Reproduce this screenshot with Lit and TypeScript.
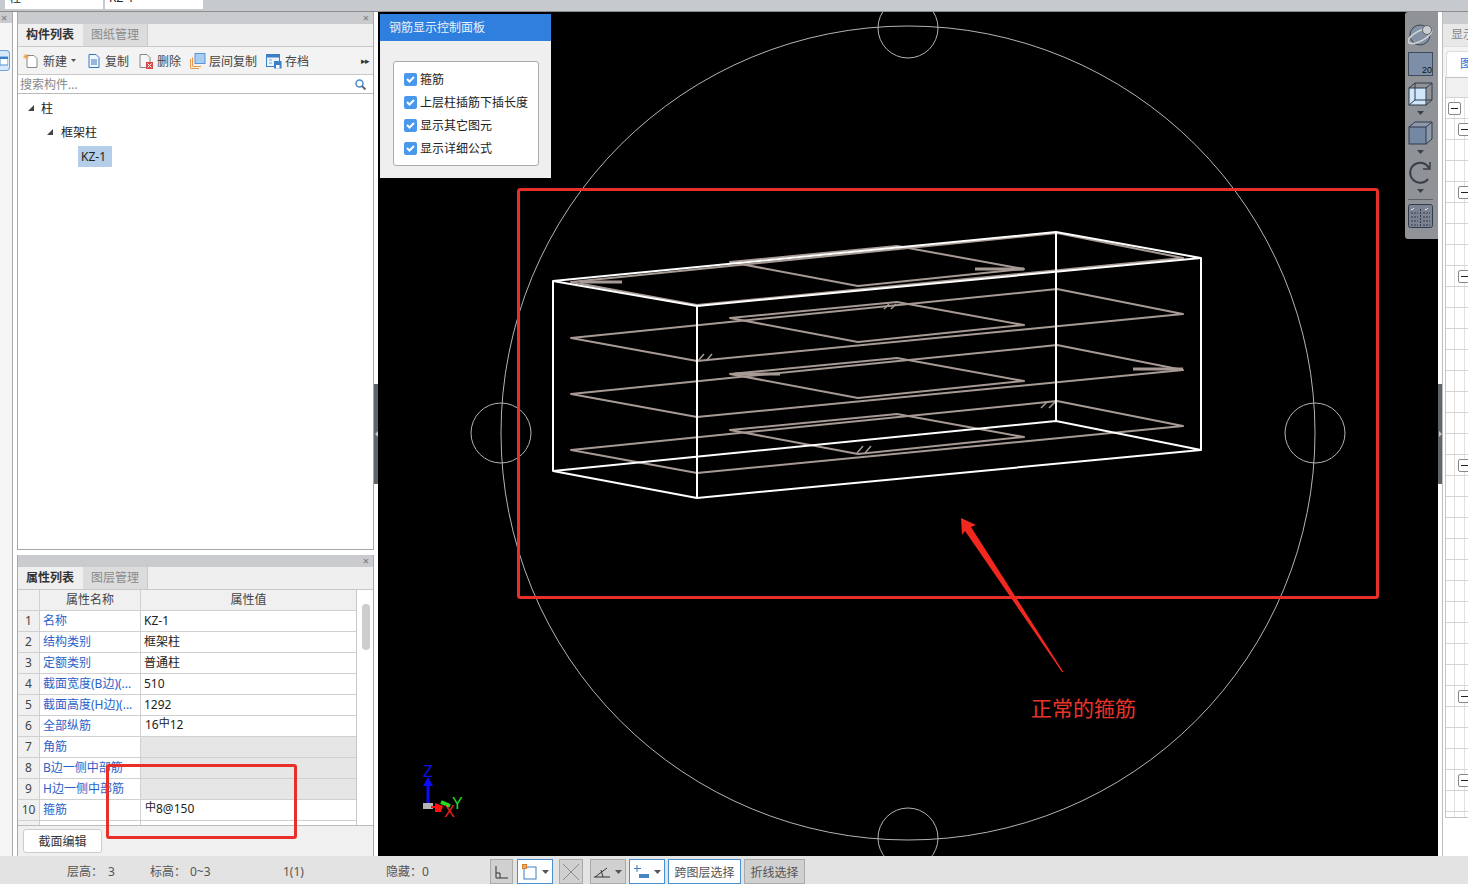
import { LitElement, html, css, svg } from 'lit';
import { customElement } from 'lit/decorators.js';

const rows = [
  { name: '名称', value: 'KZ-1' },
  { name: '结构类别', value: '框架柱' },
  { name: '定额类别', value: '普通柱' },
  { name: '截面宽度(B边)(...', value: '510' },
  { name: '截面高度(H边)(...', value: '1292' },
  { name: '全部纵筋', value: '16|12' },
  { name: '角筋', value: '', off: true },
  { name: 'B边一侧中部筋', value: '', off: true },
  { name: 'H边一侧中部筋', value: '', off: true },
  { name: '箍筋', value: '|8@150' },
  { name: '', value: '' },
];

const checks = ['箍筋', '上层柱插筋下插长度', '显示其它图元', '显示详细公式'];

// rows of the right hand table that carry a collapse box
const rightBoxes: Record<number, string> = { 0: 'l0', 1: 'l1', 4: 'l1', 8: 'l1', 17: 'l1', 28: 'l1', 32: 'l1' };

const levels = [0, 56, 112, 168];

const pts = (list: number[][], dy: number) => list.map(([x, y]) => `${x},${y + dy}`).join(' ');

const outer = [[571, 282], [697, 305], [1183, 258], [1057, 233]];
const inner = [[730, 262], [858, 286], [1024, 269], [897, 246]];

const rebar = (value: string) => {
  const parts = value.split('|');
  if (parts.length < 2) return value;
  return html`<span class="rb">${parts[0]}<span class="bar">中</span>${parts[1]}</span>`;
};

const caret = html`<svg class="caret" width="7" height="4" viewBox="0 0 7 4"><path d="M0 0h7L3.500 4z"></path></svg>`;

@customElement('app-root')
export class AppRoot extends LitElement {
  static styles = css`
    :host {
      display: block;
      position: relative;
      width: 1468px;
      height: 884px;
      overflow: hidden;
      background: #fff;
      font-family: "Noto Sans", "Noto Sans CJK SC", sans-serif;
      font-size: 12px;
      color: #222;
    }
    .top { height: 12px; background: #c6c9cd; border-bottom: 1px solid #8c8c8c; display: flex; gap: 2px; padding-left: 5px; overflow: hidden; box-sizing: border-box; }
    .top div { width: 98px; height: 9px; background: #fff; padding-left: 4px; box-sizing: border-box; overflow: hidden; }
    .top span { display: block; margin-top: -2px; line-height: 0; }
    .main { display: flex; height: 844px; }

    .strip { width: 13px; flex: none; border-right: 1px solid #aaa; box-sizing: border-box; background: #f6f6f6; }
    .strip .x { height: 11px; background: #c9cbcf; color: #777; line-height: 11px; font-size: 11px; padding-left: 1px; }
    .strip .nav { margin-top: 27px; width: 10px; height: 21px; border: 1px solid #6aa5e0; border-left: 0; border-radius: 0 4px 4px 0; background: #d6e8fa; box-sizing: border-box; display: flex; align-items: center; }

    .left { width: 361px; flex: none; padding-left: 4px; box-sizing: border-box; display: flex; flex-direction: column; gap: 5px; }
    .panel { border: 1px solid #a8a8a8; border-top: 0; display: flex; flex-direction: column; box-sizing: border-box; background: #fff; }
    .panel.one { height: 538px; }
    .panel.two { height: 301px; border-bottom: 0; }
    .bar-title { height: 12px; background: #c9cbcf; color: #777; font-size: 11px; line-height: 12px; text-align: right; padding-right: 4px; flex: none; }
    .tabs { display: flex; height: 23px; background: #efefef; border-bottom: 1px solid #c8c8c8; flex: none; box-sizing: border-box; }
    .tab { width: 64px; line-height: 22px; text-align: center; font-weight: 700; color: #333; }
    .tab.off { background: #dcdcdc; color: #8a8a8a; font-weight: 400; margin-left: 1px; border-right: 1px solid #c8c8c8; }
    .tools { display: flex; align-items: center; height: 28px; padding-left: 5px; background: #f3f3f3; border-bottom: 1px solid #c8c8c8; flex: none; box-sizing: border-box; color: #444; }
    .tool { display: flex; align-items: center; gap: 3px; margin-right: 9px; }
    .tool.first { gap: 4px; margin-right: 10px; }
    .tool svg { display: block; }
    .caret { fill: #555; margin-left: 4px; }
    .tool .caret { width: 5px; height: 3px; margin-left: 0; }
    .more { margin-left: auto; margin-right: 4px; font-size: 9px; color: #333; letter-spacing: -1px; }
    .search { display: flex; align-items: center; justify-content: space-between; height: 19px; padding: 0 7px 0 2px; border-bottom: 1px solid #bbb; color: #888; flex: none; box-sizing: border-box; }
    .tree { flex: 1; padding-top: 2px; }
    .node { display: flex; align-items: center; height: 24px; gap: 6px; }
    .node svg { fill: #444; }
    .n0 { padding-left: 10px; }
    .n1 { padding-left: 29px; }
    .leaf { margin: 2px 0 0 60px; width: 34px; height: 21px; background: #b4cde8; line-height: 21px; padding-left: 3px; box-sizing: border-box; }

    .table-wrap { display: flex; height: 236px; flex: none; border-bottom: 1px solid #bbb; overflow: hidden; box-sizing: border-box; }
    .table { width: 339px; border-right: 1px solid #c8c8c8; box-sizing: border-box; }
    .row { display: grid; grid-template-columns: 22px 101px 1fr; height: 21px; line-height: 20px; }
    .row > div { border-bottom: 1px solid #d0d0d0; border-right: 1px solid #d0d0d0; white-space: nowrap; overflow: hidden; box-sizing: border-box; }
    .row > div:last-child { border-right: 0; padding-left: 3px; }
    .num { background: #f0f0f0; text-align: center; color: #444; }
    .name { color: #2c62c8; padding-left: 3px; }
    .row.head > div { background: #f0f0f0; text-align: center; color: #444; padding: 0; }
    .row.off > div:last-child { background: #e6e6e6; }
    .rb { display: block; margin: -1px 0 0 1px; }
    .bar { font-size: 11px; position: relative; top: -2px; }
    .scroll { flex: 1; position: relative; }
    .thumb { width: 8px; height: 46px; margin: 14px 0 0 5px; background: #cdcdcd; border-radius: 4px; }
    .foot { flex: 1; background: #f0f0f0; padding: 3px 0 0 5px; }
    .btn { width: 79px; height: 24px; border: 1px solid #ccc; border-radius: 3px; background: #fff; text-align: center; line-height: 24px; box-sizing: border-box; color: #333; }

    .split { width: 4px; display: flex; align-items: center; background: #fff; box-sizing: border-box; flex: none; }
    .split.r { width: 5px; border-right: 1px solid #bdbdbd; }
    .split div { width: 4px; height: 100px; background: #5f666b; display: flex; align-items: center; justify-content: center; }
    .split svg { fill: #c4c8cb; }

    .canvas { position: relative; width: 1060px; height: 844px; background: #000; flex: none; overflow: hidden; }
    .canvas > svg { position: absolute; inset: 0; }
    .ctrl { position: absolute; left: 2px; top: 2px; width: 171px; height: 164px; background: #efefef; }
    .ctrl-title { height: 27px; background: #2f7fdf; color: #e8f1fc; line-height: 27px; padding-left: 9px; }
    .ctrl-box { margin: 20px 12px 0 13px; height: 105px; padding-top: 8px; background: #fff; border: 1px solid #aaa; border-radius: 3px; box-sizing: border-box; display: flex; flex-direction: column; gap: 5px; }
    .check { display: flex; align-items: center; gap: 3px; height: 18px; padding-left: 10px; color: #222; }
    .box { width: 13px; height: 13px; background: #4a98ec; border-radius: 2px; display: flex; align-items: center; justify-content: center; }

    .view { position: absolute; right: 0; top: 0; width: 33px; height: 227px; padding: 11px 2px 0 0; background: #8f9296; border-radius: 3px 0 0 3px; display: flex; flex-direction: column; align-items: center; box-sizing: border-box; }
    .view svg { display: block; flex: none; }
    .view .tri { fill: #3d4147; margin: 5px 0 6px; }
    .view .rule { width: 25px; height: 1px; background: #5f6368; margin: 0 0 4px; }

    .right { width: 25px; flex: none; box-sizing: border-box; overflow: hidden; display: flex; flex-direction: column; }
    .r-title { height: 12px; background: #c9cbcf; flex: none; }
    .r-tabs { height: 23px; background: #e8e8e8; padding-left: 8px; line-height: 22px; color: #888; white-space: nowrap; flex: none; border-bottom: 1px solid #ddd; box-sizing: border-box; }
    .r-sub { height: 30px; padding: 4px 0 0 3px; background: #f4f4f4; flex: none; box-sizing: border-box; }
    .r-sub div { height: 26px; background: #fff; border: 1px solid #ddd; border-bottom: 0; border-right: 0; border-radius: 4px 0 0 0; padding-left: 13px; line-height: 24px; color: #2c72d8; white-space: nowrap; box-sizing: border-box; }
    .r-table { margin-left: 2px; height: 741px; border-left: 1px solid #c4c4c4; border-bottom: 1px solid #c4c4c4; border-top: 1px solid #c4c4c4; overflow: hidden; flex: none; box-sizing: border-box; }
    .r-head { height: 20px; background: #f0f0f0; border-bottom: 1px solid #d4d4d4; box-sizing: border-box; }
    .r-row { height: 21px; display: flex; align-items: center; box-sizing: border-box; border-bottom: 1px solid #d4d4d4; background: linear-gradient(90deg, transparent 8px, #e2e2e2 8px, #e2e2e2 9px, transparent 9px, transparent 18px, #e2e2e2 18px, #e2e2e2 19px, transparent 19px); }
    .minus { width: 13px; height: 13px; border: 1px solid #888; border-radius: 2px; background: #fff; box-sizing: border-box; display: flex; align-items: center; justify-content: center; flex: none; }
    .minus::before { content: ''; width: 7px; height: 1px; background: #222; }
    .l0 { margin-left: 2px; }
    .l1 { margin-left: 12px; }

    .status { height: 28px; padding-top: 2px; box-sizing: border-box; background: #e3e3e3; display: grid; grid-template-columns: 67px 41px 42px 40px 93px 103px 104px auto; align-items: center; color: #555; }
    .status .btns { display: flex; gap: 4px; height: 25px; align-self: end; }
    .sb { height: 25px; border: 1px solid #aaa; background: #d0d0d0; box-sizing: border-box; display: flex; align-items: center; justify-content: center; gap: 5px; color: #555; }
    .sb.on { background: #fff; border-color: #4a90d0; }
    .sb .caret { margin-left: 0; }
    .w23 { width: 23px; }
    .w36 { width: 36px; }
    .w24 { width: 24px; margin-left: 2px; }
    .w36b { margin-left: 3px; }
    .tight { margin-left: -1px; }
    .w73 { width: 73px; }
    .w61 { width: 61px; }

    .mark { position: absolute; left: 106px; top: 764px; width: 191px; height: 75px; border: 3px solid #e8302a; border-radius: 3px; box-sizing: border-box; }
  `;

  private renderScene() {
    return html`
      <svg width="1060" height="844" viewBox="378 12 1060 844" fill="none">
        <g stroke="#b4b4b4" stroke-width="1">
          <circle cx="908" cy="433" r="407"></circle>
          <circle cx="908" cy="28" r="30"></circle>
          <circle cx="501" cy="433" r="30"></circle>
          <circle cx="1315" cy="433" r="30"></circle>
          <circle cx="908" cy="838" r="30"></circle>
        </g>
        <g stroke="#a79a94" stroke-width="2" stroke-linejoin="round">
          ${levels.map(
            dy => svg`
              <polygon points=${pts(outer, dy)}></polygon>
              <polygon points=${pts(inner, dy)}></polygon>
            `,
          )}
          <path stroke-width="3" d="M580 282h42M975 269h49M735 374h45M1133 369h50"></path>
          <path stroke-width="1.500" d="M698 361l6-7M706 361l6-7M884 309l5-5M891 309l5-5M1041 408l6-6M1049 408l6-6M857 453l6-7M865 453l6-7"></path>
        </g>
        <g stroke="#fff" stroke-width="2" stroke-linejoin="round">
          <polygon points="553,281 697,306 1201,258 1056,232"></polygon>
          <polygon points="553,471 697,498 1201,450 1056,421"></polygon>
          <path d="M553 281v190M697 306v192M1201 258v192M1056 232v189"></path>
        </g>
        <rect x="518.500" y="189.500" width="859" height="408" rx="2" stroke="#e8302a" stroke-width="3"></rect>
        <polygon points="961,518 976,525 971,527 1063.500,672 1062,672 965,531 962,535" fill="#f0281e"></polygon>
        <text x="1031" y="716" fill="#e8352c" font-size="21" font-family="Noto Sans CJK SC, sans-serif">正常的箍筋</text>
        <path d="M428 803v-20" stroke="#0a0aff" stroke-width="3"></path>
        <polygon points="428,777 433,786 423,786" fill="#0a0aff"></polygon>
        <rect x="423" y="803" width="10" height="6" fill="#b5b5b5"></rect>
        <path d="M441 802l9 4" stroke="#22dd22" stroke-width="4"></path>
        <path d="M431 807l5 0" stroke="#ff1010" stroke-width="2"></path>
        <polygon points="435,803 443,806 441,812 435,812" fill="#ff1010"></polygon>
        <g font-size="16" font-family="Liberation Sans, sans-serif">
          <text x="423" y="777" fill="#1010ee">Z</text>
          <text x="452" y="809" fill="#22dd22">Y</text>
          <text x="444" y="817" fill="#ee2020">X</text>
        </g>
      </svg>
    `;
  }

  private renderView() {
    const tri = html`<svg class="tri" width="7" height="4" viewBox="0 0 7 4"><path d="M0 0h7L3.500 4z"></path></svg>`;
    return html`
      <div class="view">
        <svg width="25" height="23" viewBox="0 0 25 23" fill="none">
          <circle cx="12" cy="12" r="10" fill="#8592a5" stroke="#3f454d"></circle>
          <ellipse cx="12" cy="13" rx="13" ry="5" transform="rotate(-28 12 13)" stroke="#d4d8dc" stroke-width="1.500"></ellipse>
          <circle cx="19" cy="7" r="4.500" fill="#c9ced3" stroke="#666"></circle>
        </svg>
        <svg style="margin-top:6px" width="25" height="24" viewBox="0 0 25 24">
          <rect x=".5" y=".5" width="24" height="23" fill="#7c8ea8" stroke="#3f4a5c"></rect>
          <text x="14" y="21" font-size="9" fill="#111" font-family="Liberation Sans, sans-serif">20</text>
        </svg>
        <svg style="margin-top:6px" width="25" height="24" viewBox="0 0 25 24" fill="none" stroke="#2f3a4a">
          <rect x="1" y="6" width="17" height="17" fill="#cfe6fb"></rect>
          <path d="M1 6l6-5h17v17l-6 5M18 6l6-5M7 1v17h17M1 23l6-5"></path>
        </svg>
        ${tri}
        <svg width="25" height="24" viewBox="0 0 25 24" stroke="#2f3a4a">
          <path d="M1 6l6-5h17v17l-6 5z" fill="#8c99ab"></path>
          <rect x="1" y="6" width="17" height="17" fill="#7487a3"></rect>
          <path d="M18 6l6-5" fill="none"></path>
        </svg>
        ${tri}
        <svg width="25" height="24" viewBox="0 0 25 24" fill="none" stroke="#3a3f46" stroke-width="2">
          <path d="M20 19a10 10 0 1 1 1-11"></path>
          <path d="M22 2v7h-7" stroke-width="1.500"></path>
        </svg>
        ${tri}
        <div class="rule"></div>
        <svg width="25" height="24" viewBox="0 0 25 24" fill="#7c8493" stroke="#2f3a4a">
          <rect x=".5" y=".5" width="24" height="23" rx="2"></rect>
          <path d="M12.500 5v17M3 9h7M3 13h7M3 17h7M3 21h7M15 9h7M15 13h7M15 17h7M15 21h7" fill="none" stroke-dasharray="2 1"></path>
          <path d="M3 5l1 1 2-2M17 5l1 1 2-2" stroke="#dfe3e6" fill="none"></path>
        </svg>
      </div>
    `;
  }

  private renderStatusButtons() {
    return html`
      <div class="btns">
        <div class="sb w23">
          <svg width="14" height="14" viewBox="0 0 14 14" fill="none" stroke="#333"><path d="M1 1v12h12M1 8h4v5"></path></svg>
        </div>
        <div class="sb on w36">
          <svg width="15" height="16" viewBox="0 0 15 16" fill="none">
            <rect x="2" y="3" width="12" height="12" stroke="#3b7fc4"></rect>
            <rect x=".5" y=".5" width="4" height="4" fill="#f0a860" stroke="#d88030"></rect>
          </svg>
          ${caret}
        </div>
        <div class="sb w24">
          <svg width="18" height="18" viewBox="0 0 18 18" stroke="#8a8a8a"><path d="M1 1l16 16M17 1L1 17"></path></svg>
        </div>
        <div class="sb w36 w36b">
          <svg width="16" height="13" viewBox="0 0 16 13" fill="none" stroke="#333"><path d="M0 12h16M1 12l12-9M7 5l2 7"></path></svg>
          ${caret}
        </div>
        <div class="sb on w36 tight">
          <svg width="16" height="16" viewBox="0 0 16 16" fill="none">
            <path d="M4 1v7M1 4.500h7" stroke="#3b7fc4"></path>
            <rect x="6" y="10" width="10" height="4" fill="#4a86c0"></rect>
          </svg>
          ${caret}
        </div>
        <div class="sb on w73 tight">跨图层选择</div>
        <div class="sb w61 tight">折线选择</div>
      </div>
    `;
  }

  render() {
    return html`
      <div class="top"><div><span>柱</span></div><div><span>KZ-1</span></div></div>
      <div class="main">
        <div class="strip">
          <div class="x">×</div>
          <div class="nav">
            <svg width="8" height="10" viewBox="0 0 8 10"><rect y="1" width="8" height="8" fill="#fff" stroke="#4a90d0"></rect><path d="M0 1h8v2H0z" fill="#3b7fc4"></path></svg>
          </div>
        </div>
        <div class="left">
          <div class="panel one">
            <div class="bar-title">×</div>
            <div class="tabs"><div class="tab">构件列表</div><div class="tab off">图纸管理</div></div>
            <div class="tools">
              <div class="tool first">
                <svg width="16" height="16" viewBox="0 0 16 16" fill="none">
                  <path d="M4 2.500h7l3 3v9H4z" fill="#fff" stroke="#888"></path>
                  <path d="M3 1v5M0.500 3.500h5M1 1.500l4 4M5 1.500l-4 4" stroke="#f0a040"></path>
                </svg>
                <span>新建</span>${caret}
              </div>
              <div class="tool">
                <svg width="16" height="16" viewBox="0 0 16 16" fill="none" stroke="#3b78b8">
                  <path d="M3 1.500h7l3 3v10H3z" fill="#eef5fc"></path>
                  <path d="M5 7h6M5 9h6M5 11h6"></path>
                </svg>
                <span>复制</span>
              </div>
              <div class="tool">
                <svg width="16" height="16" viewBox="0 0 16 16" fill="none">
                  <path d="M2 1.500h7l3 3v10H2z" fill="#f6f6f6" stroke="#888"></path>
                  <rect x="8" y="9" width="7" height="7" fill="#d64848"></rect>
                  <path d="M9.500 10.500l4 4M13.500 10.500l-4 4" stroke="#fff"></path>
                </svg>
                <span>删除</span>
              </div>
              <div class="tool">
                <svg width="16" height="16" viewBox="0 0 16 16" fill="none">
                  <path d="M.5 15V6M.5 15.500H9M2.500 13V4.500M2.500 13.500H11" stroke="#e8944a"></path>
                  <rect x="5" y=".5" width="10" height="10" fill="#a9cdf2" stroke="#5a96d2"></rect>
                </svg>
                <span>层间复制</span>
              </div>
              <div class="tool">
                <svg width="16" height="16" viewBox="0 0 16 16" fill="none">
                  <rect x=".5" y="1.500" width="13" height="12" fill="#eaf2fb" stroke="#3b7fc4"></rect>
                  <path d="M1 3h12" stroke="#3b7fc4" stroke-width="3"></path>
                  <path d="M3 7h3M3 10h3" stroke="#7aa8d8"></path>
                  <rect x="8" y="8" width="7.500" height="7.500" fill="#3b7fc4"></rect>
                  <rect x="10" y="12" width="3.500" height="3.500" fill="#fff"></rect>
                </svg>
                <span>存档</span>
              </div>
              <span class="more">▸▸</span>
            </div>
            <div class="search">
              <span>搜索构件...</span>
              <svg width="11" height="11" viewBox="0 0 11 11" fill="none">
                <circle cx="4.500" cy="4.500" r="3.500" stroke="#4a8ac8" stroke-width="1.500"></circle>
                <path d="M7 7l3.500 3.500" stroke="#667" stroke-width="2"></path>
              </svg>
            </div>
            <div class="tree">
              <div class="node n0"><svg width="6" height="6" viewBox="0 0 6 6"><path d="M6 0v6H0z"></path></svg><span style="margin-left:1px">柱</span></div>
              <div class="node n1"><svg width="6" height="6" viewBox="0 0 6 6"><path d="M6 0v6H0z"></path></svg><span style="margin-left:2px">框架柱</span></div>
              <div class="leaf">KZ-1</div>
            </div>
          </div>
          <div class="panel two">
            <div class="bar-title">×</div>
            <div class="tabs"><div class="tab">属性列表</div><div class="tab off">图层管理</div></div>
            <div class="table-wrap">
              <div class="table">
                <div class="row head"><div></div><div>属性名称</div><div>属性值</div></div>
                ${rows.map(
                  (r, i) => html`
                    <div class="row ${r.off ? 'off' : ''}">
                      <div class="num">${r.name ? i + 1 : ''}</div>
                      <div class="name">${r.name}</div>
                      <div>${rebar(r.value)}</div>
                    </div>
                  `,
                )}
              </div>
              <div class="scroll"><div class="thumb"></div></div>
            </div>
            <div class="foot"><div class="btn">截面编辑</div></div>
          </div>
        </div>
        <div class="split">
          <div><svg width="3" height="6" viewBox="0 0 3 6"><path d="M3 0v6L0 3z"></path></svg></div>
        </div>
        <div class="canvas">
          ${this.renderScene()}
          <div class="ctrl">
            <div class="ctrl-title">钢筋显示控制面板</div>
            <div class="ctrl-box">
              ${checks.map(
                c => html`
                  <div class="check">
                    <span class="box"><svg width="9" height="7" viewBox="0 0 9 7" fill="none" stroke="#fff" stroke-width="2"><path d="M1 3l2.500 2.500L8 1"></path></svg></span>
                    <span>${c}</span>
                  </div>
                `,
              )}
            </div>
          </div>
          ${this.renderView()}
        </div>
        <div class="split r">
          <div><svg width="3" height="6" viewBox="0 0 3 6"><path d="M0 0v6l3-3z"></path></svg></div>
        </div>
        <div class="right">
          <div class="r-title"></div>
          <div class="r-tabs">显示</div>
          <div class="r-sub"><div>图</div></div>
          <div class="r-table">
            <div class="r-head"></div>
            ${Array.from({ length: 35 }, (_, i) => html`
              <div class="r-row">${rightBoxes[i] ? html`<span class="minus ${rightBoxes[i]}"></span>` : ''}</div>
            `)}
          </div>
        </div>
      </div>
      <div class="status">
        <span></span>
        <span>层高：</span>
        <span>3</span>
        <span>标高：</span>
        <span>0~3</span>
        <span>1(1)</span>
        <span>隐藏：0</span>
        ${this.renderStatusButtons()}
      </div>
      <div class="mark"></div>
    `;
  }
}
